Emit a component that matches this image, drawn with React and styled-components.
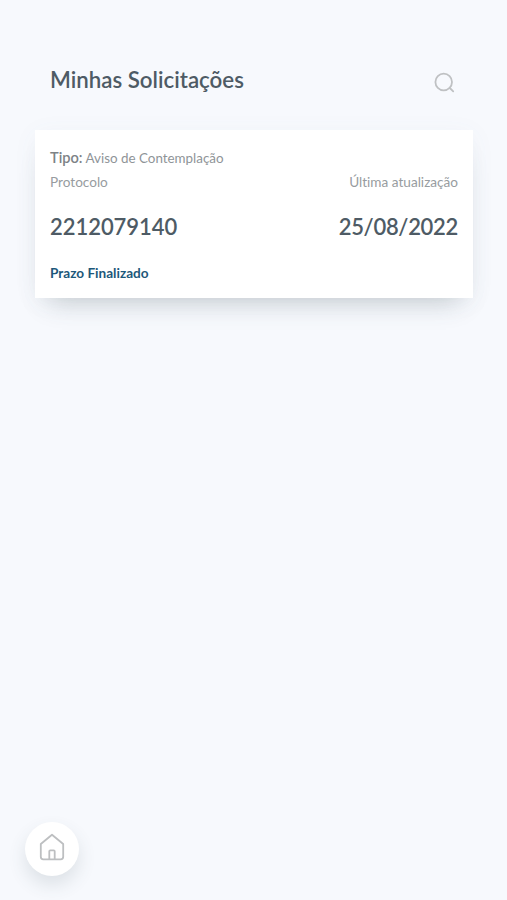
import React from "react";
import styled, { createGlobalStyle } from "styled-components";

const GlobalStyle = createGlobalStyle`
  * { box-sizing: border-box; }
  body { margin: 0; background: #f7f9fd; font-family: Lato, "Open Sans", sans-serif; font-variant-ligatures: none; }
`;

const Page = styled.main`
  display: flex;
  flex-direction: column;
  min-height: 100vh;
  padding: 62px 34px 24px 35px;
  background: #f7f9fd;
`;

const Header = styled.header`
  display: flex;
  justify-content: space-between;
  height: 68px;
  padding: 0 15px;
`;

const Title = styled.h1`
  margin: 0;
  color: #4e5b65;
  font-size: 22.3px;
  font-weight: 600;
  line-height: 36px;
  white-space: nowrap;
`;

const IconButton = styled.button`
  display: flex;
  width: 26px;
  height: 26px;
  margin-top: 8px;
  padding: 0;
  border: 0;
  background: none;
`;

const Card = styled.article`
  display: flex;
  flex-direction: column;
  height: 167.5px;
  padding: 16px 15px 0;
  background: #fff;
  box-shadow: 0 16px 26px -14px rgba(64, 82, 90, 0.3), 0 4px 24px rgba(90, 110, 130, 0.05);
`;

const Kind = styled.p`
  margin: 0;
  color: #8f9498;
  font-size: 13.4px;
  line-height: 24px;
`;

const KindLabel = styled.strong`
  color: #7d8286;
  font-size: 14.6px;
  font-weight: 600;
`;

const Row = styled.div`
  display: flex;
  justify-content: space-between;
`;

const Label = styled.span`
  color: #979ca0;
  font-size: 13.6px;
  line-height: 24px;
`;

const Value = styled.span`
  margin-top: 18px;
  color: #4e5b65;
  font-size: 22px;
  font-weight: 600;
  letter-spacing: ${({ $tight }) => ($tight ? "-0.3px" : "-0.04px")};
  line-height: 30px;
`;

const Status = styled.p`
  margin: 21px 0 0;
  color: #1d587a;
  font-size: 13.6px;
  font-weight: 700;
  line-height: 20px;
`;

const HomeButton = styled.button`
  display: flex;
  align-items: center;
  justify-content: center;
  width: 54px;
  height: 54px;
  margin: auto 0 0 -10.5px;
  padding: 0 0 4px;
  border: 0;
  border-radius: 50%;
  background: #fff;
  box-shadow: 0 9px 18px rgba(64, 82, 90, 0.14);
`;

const SearchIcon = () => (
  <svg width="26" height="26" viewBox="0 0 26 26" fill="none" stroke="#bfc1c3" strokeWidth="1.8" strokeLinecap="round">
    <circle cx="11.7" cy="12" r="8.3" />
    <path d="m17.8 18 3.4 3.4" />
  </svg>
);

const HomeIcon = () => (
  <svg width="26" height="28" viewBox="0 0 26 28" fill="none" stroke="#bdbfc1" strokeWidth="1.8" strokeLinejoin="round">
    <path d="M1.8 11 13 1.7 24.2 11v12.8a2.5 2.5 0 0 1-2.5 2.5H4.3a2.5 2.5 0 0 1-2.5-2.5Z" />
    <path d="M10.3 26.3v-8a1 1 0 0 1 1-1h3.4a1 1 0 0 1 1 1v8" />
  </svg>
);

export default function App() {
  return (
    <>
      <GlobalStyle />
      <Page>
        <Header>
          <Title>Minhas Solicitações</Title>
          <IconButton aria-label="Buscar"><SearchIcon /></IconButton>
        </Header>
        <Card>
          <Kind><KindLabel>Tipo:</KindLabel> Aviso de Contemplação</Kind>
          <Row>
            <Label>Protocolo</Label>
            <Label>Última atualização</Label>
          </Row>
          <Row>
            <Value>2212079140</Value>
            <Value $tight>25/08/2022</Value>
          </Row>
          <Status>Prazo Finalizado</Status>
        </Card>
        <HomeButton aria-label="Início"><HomeIcon /></HomeButton>
      </Page>
    </>
  );
}
